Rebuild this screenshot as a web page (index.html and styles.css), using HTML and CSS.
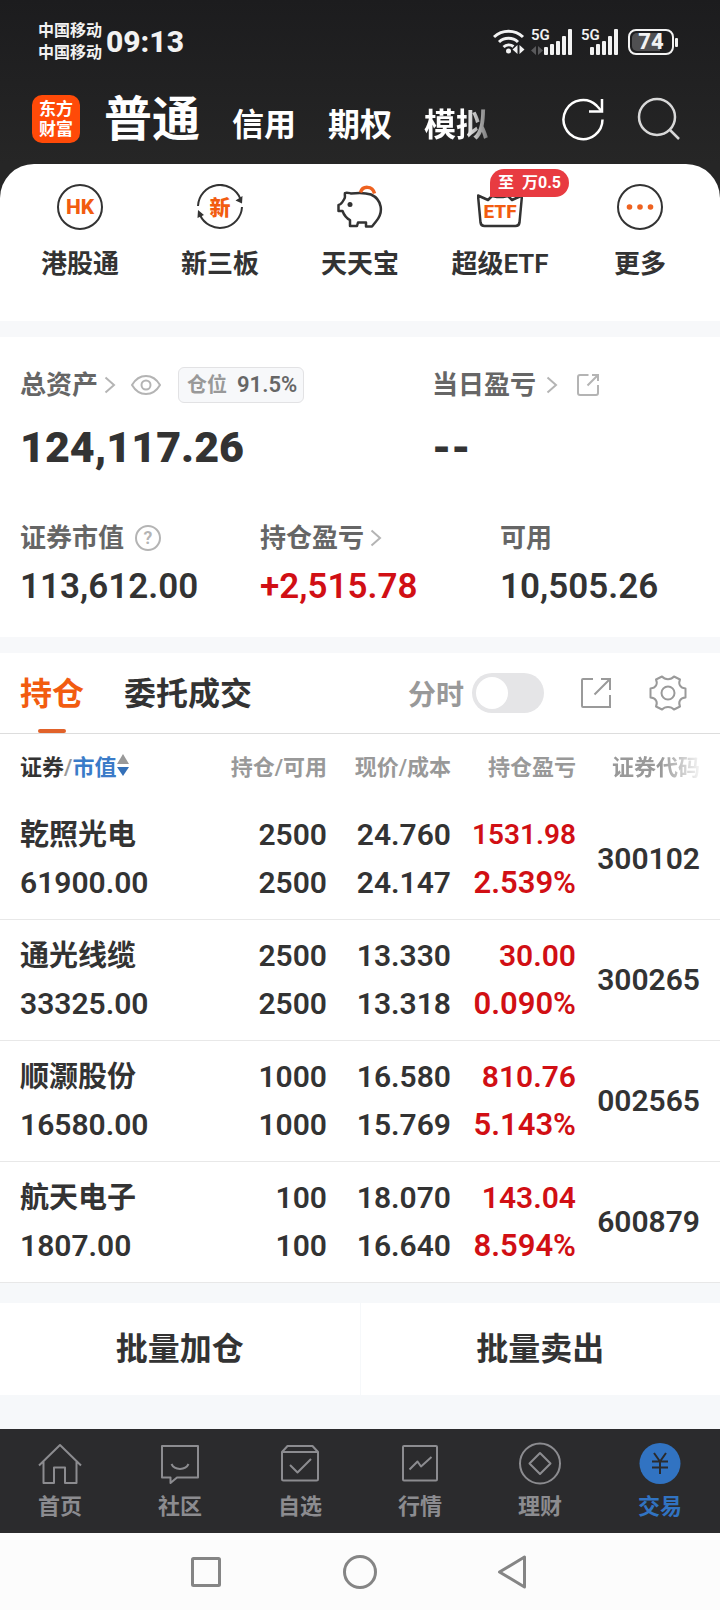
FILE: index.html
```html
<!DOCTYPE html>
<html lang="zh-CN">
<head>
<meta charset="utf-8">
<meta name="viewport" content="width=device-width, initial-scale=1">
<title>交易 - 东方财富</title>
<link rel="stylesheet" href="styles.css">
</head>
<body>
<div class="top">
  <div class="status">
    <div class="carriers"><span>中国移动</span><span>中国移动</span></div>
    <div class="clock">09:13</div>
    <div class="indicators">
      <svg width="32" height="26" viewBox="0 0 32 26" fill="none" stroke="#f2f2f2" stroke-width="3">
        <path d="M1 8a21 21 0 0 1 29 0"/><path d="M6 13a14 14 0 0 1 19 0"/><path d="M10.500 18a8 8 0 0 1 10-.5"/>
        <circle cx="15.500" cy="22" r="2.500" fill="#f2f2f2" stroke="none"/>
        <path d="M24.500 16v9l-5-4.500zM26.500 16v9l5-4.500z" fill="#f2f2f2" stroke="none"/>
      </svg>
      <div class="signal">
        <span class="net">5G</span>
        <svg width="42" height="26" viewBox="0 0 42 26" fill="#f2f2f2">
          <path d="M5 17v9l-5-4.500zM7 17v9l5-4.500z" fill="#5a5a5c"/>
          <rect x="13" y="18" width="4" height="8" rx="1"/><rect x="19" y="15" width="4" height="11" rx="1"/><rect x="25" y="12" width="4" height="14" rx="1"/><rect x="31" y="7" width="4" height="19" rx="1"/><rect x="37" y="0" width="4" height="26" rx="1"/>
        </svg>
      </div>
      <div class="signal second">
        <span class="net">5G</span>
        <svg width="38" height="26" viewBox="0 0 38 26" fill="#f2f2f2">
          <rect x="9" y="18" width="4" height="8" rx="1"/><rect x="15" y="15" width="4" height="11" rx="1"/><rect x="21" y="12" width="4" height="14" rx="1"/><rect x="27" y="7" width="4" height="19" rx="1"/><rect x="33" y="0" width="4" height="26" rx="1"/>
        </svg>
      </div>
      <div class="battery"><span class="level">74</span></div>
    </div>
  </div>
  <header class="appbar">
    <div class="logo"><span>东方</span><span>财富</span></div>
    <nav class="accounts">
      <button class="account current">普通</button>
      <button class="account">信用</button>
      <button class="account">期权</button>
      <button class="account fading">模拟</button>
    </nav>
    <div class="tools">
      <button class="icon-btn" aria-label="刷新"><svg width="44" height="44" viewBox="0 0 44 44" fill="none" stroke="#fff" stroke-width="2.500"><path d="M41.500 22.500A19.500 19.500 0 1 1 35.500 8.500l5 5.500"/><path d="M41 2v12.500H28"/></svg></button>
      <button class="icon-btn" aria-label="搜索"><svg width="44" height="44" viewBox="0 0 44 44" fill="none" stroke="#d8d8d8" stroke-width="2.500"><circle cx="20" cy="20" r="18"/><path d="M32.500 32.500 42 42"/></svg></button>
    </div>
  </header>
</div>

<main>
  <section class="quick">
    <a class="entry" href="#">
      <svg width="46" height="46" viewBox="0 0 46 46"><circle cx="23" cy="23" r="22" fill="none" stroke="#333" stroke-width="2"/><text class="glyph latin" x="23" y="30" text-anchor="middle">HK</text></svg>
      <span>港股通</span>
    </a>
    <a class="entry" href="#">
      <svg width="46" height="46" viewBox="0 0 46 46"><g fill="none" stroke="#333" stroke-width="2"><path d="M1 22A22 22 0 0 1 43.500 15"/><path d="M45 23A22 22 0 0 1 3 31"/></g><path d="M38.500 16.500l7-4.500-.5 7.500zM.5 34l.5-8 6 5z" fill="#333"/><text class="glyph hanzi" x="23" y="31" text-anchor="middle">新</text></svg>
      <span>新三板</span>
    </a>
    <a class="entry" href="#">
      <svg width="46" height="46" viewBox="0 0 46 46" fill="none" stroke="#333" stroke-width="2.500" stroke-linejoin="round"><path d="M14 9.500c8-1 14-1 20 1 11 5 13 18 5 27l-4 5h-6v-4h-8l-1 3.500h-7V36c-4-2-6-5-7.500-9H1.500v-6c3-.5 4-3 6-6.500 1-1.500 0-3 .5-5.500 2-1 4 0 6 .5z"/><circle cx="13" cy="20.500" r="2.500" fill="#333" stroke="none"/><path d="M23.500 8.500c2-7 12-7 14 1" stroke="#ee6220" stroke-width="3.500"/></svg>
      <span>天天宝</span>
    </a>
    <a class="entry" href="#">
      <svg width="46" height="46" viewBox="0 0 46 46"><path d="M1 11.500l10 4.500 4-4 5 1h6l5-1 4 4 10-4.500-2.500 27q-.5 3.500-4 3.500h-31q-3.500 0-4-3.500z" fill="none" stroke="#333" stroke-width="2.500" stroke-linejoin="round"/><text class="glyph etf" x="23" y="34" text-anchor="middle">ETF</text></svg>
      <span>超级ETF</span>
      <em class="promo">至&nbsp; 万0.5</em>
    </a>
    <a class="entry" href="#">
      <svg width="46" height="46" viewBox="0 0 46 46"><circle cx="23" cy="23" r="22" fill="none" stroke="#333" stroke-width="2"/><g fill="#ee6220"><circle cx="12.500" cy="23" r="2.800"/><circle cx="23" cy="23" r="2.800"/><circle cx="33.500" cy="23" r="2.800"/></g></svg>
      <span>更多</span>
    </a>
  </section>

  <section class="assets">
    <div class="totals">
      <div>
        <div class="caption">总资产<svg class="chev" width="12" height="18" viewBox="0 0 12 18"><path d="M1.500 1.500 10 9l-8.500 7.500"/></svg>
          <button class="icon-btn eye" aria-label="隐藏金额"><svg width="30" height="20" viewBox="0 0 30 20" fill="none" stroke="#b4b4b4" stroke-width="2"><path d="M1 10C8-2 22-2 29 10 22 22 8 22 1 10z"/><circle cx="15" cy="10" r="4.500"/></svg></button>
          <span class="ratio">仓位<b>91.5%</b></span>
        </div>
        <div class="big">124,117.26</div>
      </div>
      <div>
        <div class="caption">当日盈亏<svg class="chev wide" width="12" height="18" viewBox="0 0 12 18"><path d="M1.500 1.500 10 9l-8.500 7.500"/></svg>
          <button class="icon-btn share-sm" aria-label="分享"><svg width="24" height="24" viewBox="0 0 24 24" fill="none" stroke="#b4b4b4" stroke-width="2"><path d="M12.500 2H4Q2 2 2 4v16q0 2 2 2h16q2 0 2-2v-8"/><path d="M11.500 12.500 22 2M16 2h6v6"/></svg></button>
        </div>
        <div class="big">--</div>
      </div>
    </div>
    <div class="details">
      <div>
        <div class="caption">证券市值<button class="help" aria-label="说明">?</button></div>
        <div class="amount">113,612.00</div>
      </div>
      <div>
        <div class="caption">持仓盈亏<svg class="chev" width="12" height="18" viewBox="0 0 12 18"><path d="M1.500 1.500 10 9l-8.500 7.500"/></svg></div>
        <div class="amount up">+2,515.78</div>
      </div>
      <div>
        <div class="caption">可用</div>
        <div class="amount">10,505.26</div>
      </div>
    </div>
  </section>

  <section class="holdings">
    <div class="tabs">
      <button class="tab active">持仓</button>
      <button class="tab">委托成交</button>
      <label class="minute">分时<input class="switch" type="checkbox"></label>
      <button class="icon-btn share" aria-label="分享持仓"><svg width="32" height="32" viewBox="0 0 32 32" fill="none" stroke="#9a9a9a" stroke-width="2"><path d="M13 2H3Q2 2 2 3v26q0 1 1 1h27V18"/><path d="M14.500 17.500 30 2M21 2h9v11"/></svg></button>
      <button class="icon-btn" aria-label="设置"><svg width="38" height="38" viewBox="0 0 38 38" fill="none" stroke="#9a9a9a" stroke-width="2" stroke-linejoin="round"><path d="M13 2.500C16 6 22 6 25 2.500L31 5.500C29 10 31 14 36.500 14.500V23.500C31 24 29 28 31 32.500L25 35.500C22 32 16 32 13 35.500L7 32.500C9 28 7 24 1.500 23.500V14.500C7 14 9 10 7 5.500Z"/><circle cx="19" cy="19" r="6.500"/></svg></button>
    </div>
    <table class="positions">
      <colgroup><col><col class="c-qty"><col class="c-price"><col class="c-gain"><col class="c-code"></colgroup>
      <thead>
        <tr>
          <th><span class="sort"><span><span class="dark">证券</span>/<span class="blue">市值</span></span><svg width="12" height="24" viewBox="0 0 12 24"><path d="M6 1l6 10H0z" fill="#999"/><path d="M0 14h12L6 23z" fill="#3470b8"/></svg></span></th>
          <th>持仓/可用</th><th>现价/成本</th><th>持仓盈亏</th><th><span class="fade">证券代码</span></th>
        </tr>
      </thead>
      <tbody>
        <tr><td><span class="name">乾照光电</span><br>61900.00</td><td>2500<br>2500</td><td>24.760<br>24.147</td><td class="up"><span class="long">1531.98</span><br><span class="pct">2.539%</span></td><td>300102</td></tr>
        <tr><td><span class="name">通光线缆</span><br>33325.00</td><td>2500<br>2500</td><td>13.330<br>13.318</td><td class="up">30.00<br><span class="pct">0.090%</span></td><td>300265</td></tr>
        <tr><td><span class="name">顺灏股份</span><br>16580.00</td><td>1000<br>1000</td><td>16.580<br>15.769</td><td class="up">810.76<br><span class="pct">5.143%</span></td><td>002565</td></tr>
        <tr><td><span class="name">航天电子</span><br>1807.00</td><td>100<br>100</td><td>18.070<br>16.640</td><td class="up">143.04<br><span class="pct">8.594%</span></td><td>600879</td></tr>
      </tbody>
    </table>
  </section>

  <div class="batch">
    <button>批量加仓</button>
    <button>批量卖出</button>
  </div>
</main>

<nav class="bottom">
  <a href="#"><svg width="44" height="44" viewBox="0 0 44 44"><path d="M1 23.500 22 3l21 20.500M5.500 19.500V41H16V25.500h11V41h11.500V19.500"/></svg>首页</a>
  <a href="#"><svg width="44" height="44" viewBox="0 0 44 44"><path d="M4 4h36v31.500H19L12.500 41v-5.500H4zM13.500 22c3 6.500 14 6.500 17 0"/></svg>社区</a>
  <a href="#"><svg width="44" height="44" viewBox="0 0 44 44"><path d="M4 10v27q0 1.500 1.500 1.500h33q1.500 0 1.500-1.500V10l-5.500-6H9.500L4 10h36M12 23l7.500 7.500L33 17"/></svg>自选</a>
  <a href="#"><svg width="44" height="44" viewBox="0 0 44 44"><rect x="5" y="4" width="34" height="34.500" rx="1"/><path d="M11.500 27.500l8-8 3.500 5 10.500-9.500"/></svg>行情</a>
  <a href="#"><svg width="44" height="44" viewBox="0 0 44 44"><circle cx="22" cy="21.500" r="20"/><path d="M22 11l10.500 10.500L22 32 11.500 21.500z"/></svg>理财</a>
  <a class="here" href="#"><svg width="44" height="44" viewBox="0 0 44 44"><circle class="disc" cx="22" cy="21.500" r="20.500"/><path class="yen" d="M16 11l6 8.500 6-8.500M22 19v13M14 19.500h16M14 25.500h16"/></svg>交易</a>
</nav>

<div class="system">
  <button class="icon-btn" aria-label="最近任务"><svg width="34" height="34" viewBox="0 0 34 34"><rect x="3.500" y="3.500" width="27" height="27" rx="1"/></svg></button>
  <button class="icon-btn" aria-label="主屏幕"><svg width="34" height="34" viewBox="0 0 34 34"><circle cx="17" cy="17" r="15.500"/></svg></button>
  <button class="icon-btn" aria-label="返回"><svg width="34" height="34" viewBox="0 0 34 34"><path d="M2.500 17 27.500 2v30z"/></svg></button>
</div>
</body>
</html>
```
FILE: styles.css
```css
* { box-sizing: border-box; }

body {
  margin: 0;
  background: #fff;
  color: #333;
  font-family: Roboto, "Noto Sans CJK SC", sans-serif;
  font-weight: 600;
}

button {
  padding: 0;
  border: 0;
  background: none;
  color: inherit;
  font: inherit;
}

a { color: inherit; text-decoration: none; }
svg { display: block; flex: none; }
.icon-btn { display: flex; }

/* Status bar and account switcher */
.top {
  height: 200px;
  background: linear-gradient(#1c1c1e, #262626 164px);
}

.status {
  display: flex;
  align-items: center;
  padding: 20px 46px 0 38px;
  height: 64px;
  color: #f2f2f2;
}

.carriers {
  display: flex;
  flex-direction: column;
  font-size: 16px;
  font-weight: 700;
  line-height: 22px;
}

.clock { margin-left: 4px; font-size: 30px; font-weight: 800; line-height: 44px; }
.indicators { display: flex; align-items: center; margin-left: auto; }
.signal { position: relative; margin-left: 6px; }
.signal.second { margin-left: 8px; }
.net { position: absolute; top: -1px; left: 0; font-size: 15px; line-height: 15px; }

.battery {
  position: relative;
  display: flex;
  margin-left: 9px;
  padding: 2px;
  width: 46px;
  height: 26px;
  border: 2px solid #f2f2f2;
  border-radius: 8px;
}

.battery::after {
  content: "";
  position: absolute;
  top: 7px;
  right: -6px;
  width: 3px;
  height: 9px;
  border-radius: 1px;
  background: #f2f2f2;
}

.level {
  flex: 1;
  border-radius: 5px;
  background: linear-gradient(90deg, #505052 74%, transparent 74%);
  font-size: 22px;
  font-weight: 800;
  line-height: 18px;
  text-align: center;
}

.appbar { display: flex; align-items: flex-start; padding: 31px 39px 0 32px; color: #fff; }

.logo {
  display: flex;
  flex-direction: column;
  align-items: center;
  justify-content: center;
  width: 48px;
  height: 48px;
  border-radius: 10px;
  background: #ff4a08;
  font-size: 17px;
  font-weight: 700;
  line-height: 20px;
}

.accounts { display: flex; align-items: baseline; gap: 32px; margin: 3px 0 0 24px; }
.account { font-size: 32px; font-weight: 700; line-height: 44px; }
.current { font-size: 48px; }

.fading {
  -webkit-mask-image: linear-gradient(90deg, #000 62%, rgba(0, 0, 0, .4));
  mask-image: linear-gradient(90deg, #000 62%, rgba(0, 0, 0, .4));
}

.tools { display: flex; gap: 32px; margin: 2px 0 0 auto; }

/* Shortcuts */
.quick {
  display: grid;
  grid-template-columns: repeat(5, 1fr);
  position: relative;
  margin-top: -36px;
  padding: 20px 10px 38px;
  border-radius: 34px 34px 0 0;
  background: #fff;
}

.entry {
  position: relative;
  display: flex;
  flex-direction: column;
  align-items: center;
  gap: 15px;
  font-size: 26px;
  line-height: 38px;
}

.glyph { fill: #f25c10; font-weight: 800; }
.latin { font-size: 21px; }
.hanzi { font-size: 21px; }
.etf { font-size: 19px; }

.promo {
  position: absolute;
  top: -15px;
  left: 60px;
  padding: 0 8px;
  border-radius: 14px 14px 14px 0;
  background: #e83b41;
  color: #fff;
  font-size: 16px;
  font-style: normal;
  font-weight: 700;
  line-height: 28px;
  white-space: nowrap;
}

/* Asset summary */
.assets {
  padding: 30px 0;
  border-top: 16px solid #f7f8fa;
  border-bottom: 16px solid #f7f8fa;
}

.totals { display: grid; grid-template-columns: 412fr 308fr; }
.details { display: grid; grid-template-columns: repeat(3, 1fr); margin-top: 48px; }
.totals > div, .details > div { padding-left: 20px; }

.caption {
  display: flex;
  align-items: center;
  height: 36px;
  color: #666;
  font-size: 26px;
  line-height: 36px;
  white-space: nowrap;
}

.chev { margin-left: 6px; fill: none; stroke: #b4b4b4; stroke-width: 2; }
.chev.wide { margin-left: 10px; }
.eye { margin-left: 15px; }
.share-sm { margin-left: 18px; }

.ratio {
  margin-left: 17px;
  padding: 0 6px 0 8px;
  border: 1px solid #e2e2e4;
  border-radius: 6px;
  background: #f7f8fa;
  color: #999;
  font-size: 20px;
  line-height: 34px;
}

.ratio b { margin-left: 10px; color: #666; font-size: 22px; font-weight: 600; }
.big { margin-top: 19px; font-size: 43px; font-weight: 900; line-height: 50px; }
.amount { margin-top: 11px; font-size: 35px; line-height: 40px; }
.up { color: #d10f14; }

.help {
  margin-left: 11px;
  width: 26px;
  height: 26px;
  border: 2px solid #b4b4b4;
  border-radius: 50%;
  color: #b4b4b4;
  font-size: 18px;
  line-height: 22px;
}

/* Holdings */
.tabs {
  display: flex;
  align-items: center;
  padding: 0 33px 0 20px;
  height: 81px;
  border-bottom: 1px solid #ddd;
}

.tab {
  position: relative;
  align-self: stretch;
  padding-bottom: 4px;
  font-size: 32px;
  font-weight: 700;
}

.tab + .tab { margin-left: 40px; }
.active { color: #f25c10; }

.active::after {
  content: "";
  position: absolute;
  bottom: 0;
  left: calc(50% - 14px);
  width: 28px;
  height: 4px;
  border-radius: 2px;
  background: #e1622a;
}

.minute { display: flex; align-items: center; gap: 8px; margin-left: auto; color: #999; font-size: 28px; }

.switch {
  appearance: none;
  margin: 0;
  padding: 4px;
  width: 72px;
  height: 40px;
  border-radius: 20px;
  background: #e5e5e7;
}

.switch::before {
  content: "";
  display: block;
  width: 32px;
  height: 32px;
  border-radius: 50%;
  background: #fff;
}

.switch:checked::before { margin-left: auto; }
.share { margin: 0 37px 0 36px; }

.positions {
  width: 100%;
  border-collapse: separate;
  border-spacing: 0;
  table-layout: fixed;
  text-align: right;
}

.c-qty, .c-price { width: 124px; }
.c-gain { width: 125px; }
.c-code { width: 144px; }
th, td { padding: 0; white-space: nowrap; }

th {
  padding-bottom: 2px;
  height: 64px;
  color: #999;
  font-size: 22px;
  font-weight: 600;
}

td {
  padding: 12px 0;
  border-bottom: 1px solid #e8e8e8;
  font-size: 30px;
  line-height: 48px;
}

th:first-child, td:first-child { padding-left: 20px; text-align: left; }
th:last-child, td:last-child { padding-right: 20px; }
.name { font-size: 29px; }
.long { font-size: 28px; }
.pct { font-size: 31px; }
.sort { display: flex; align-items: center; gap: 1px; }
.dark { color: #333; }
.blue { color: #3a7bc8; }

.fade {
  -webkit-mask-image: linear-gradient(90deg, #000 55%, rgba(0, 0, 0, .1));
  mask-image: linear-gradient(90deg, #000 55%, rgba(0, 0, 0, .1));
}

/* Batch actions */
.batch {
  display: grid;
  grid-template-columns: 1fr 1fr;
  gap: 1px;
  padding: 20px 0 34px;
  background: #f6f8fa;
}

.batch button {
  background: #fff;
  font-size: 32px;
  font-weight: 700;
  line-height: 92px;
}

/* App navigation */
.bottom { display: grid; grid-template-columns: repeat(6, 1fr); padding: 13px 0 10px; background: #2b2b2d; }

.bottom a {
  display: flex;
  flex-direction: column;
  align-items: center;
  gap: 5px;
  color: #8c8c90;
  font-size: 22px;
  line-height: 32px;
}

.bottom svg { fill: none; stroke: #8c8c90; stroke-width: 2; stroke-linejoin: round; }
.bottom .here { color: #3173c2; }
.bottom .disc { fill: #3173c2; stroke: none; }
.bottom .yen { stroke: #2b2b2d; }

/* System navigation */
.system { display: flex; justify-content: center; gap: 120px; padding: 22px 0; background: #fcfcfc; }
.system svg { fill: none; stroke: #858585; stroke-width: 3; stroke-linejoin: round; }
```
